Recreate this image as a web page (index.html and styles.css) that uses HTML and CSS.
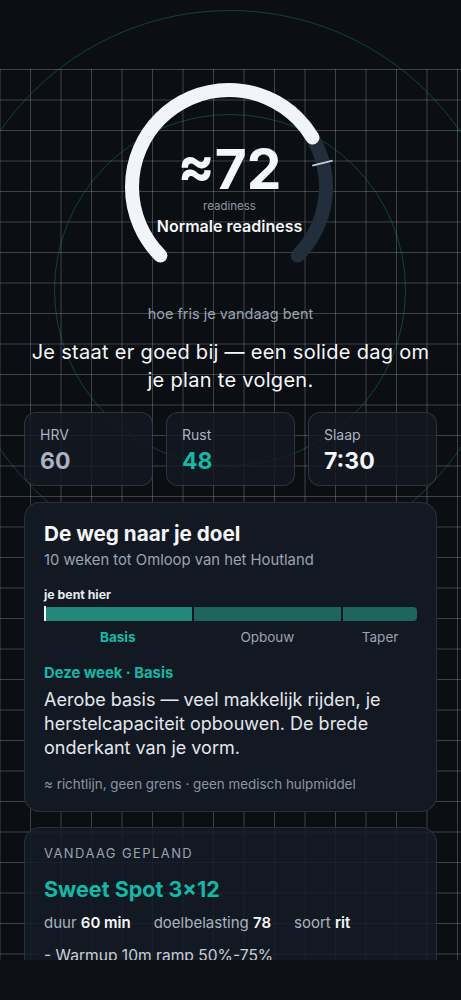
FILE: index.html
```html
<!DOCTYPE html>
<html lang="nl">
<head>
<meta charset="utf-8">
<title>Readiness</title>
<link rel="stylesheet" href="styles.css">
</head>
<body>
<div class="app">
  <div class="rings" aria-hidden="true">
    <span class="ring ring-outer"></span>
    <span class="ring ring-inner"></span>
  </div>
  <header class="topbar"></header>
  <main class="feed">
    <div class="feed-inner">
      <section class="gauge">
        <svg class="gauge-svg" viewBox="0 0 224 190" width="224" height="190">
          <path class="gauge-track" d="M42.41 179.59 A97 97 0 1 1 179.59 179.59" pathLength="100"/>
          <path class="gauge-fill" d="M42.41 179.59 A97 97 0 1 1 179.59 179.59" pathLength="100" stroke-dasharray="72 200"/>
          <line class="gauge-tick" x1="194.3" y1="89.6" x2="214.6" y2="84.6"/>
        </svg>
        <div class="gauge-text">
          <div class="gauge-value">≈72</div>
          <div class="gauge-unit">readiness</div>
          <div class="gauge-state">Normale readiness</div>
        </div>
      </section>

      <p class="kicker">hoe fris je vandaag bent</p>
      <h1 class="headline">Je staat er goed bij — een solide dag om je plan te volgen.</h1>

      <div class="metrics">
        <div class="metric">
          <div class="metric-label">HRV</div>
          <div class="metric-value muted">60</div>
        </div>
        <div class="metric">
          <div class="metric-label">Rust</div>
          <div class="metric-value teal">48</div>
        </div>
        <div class="metric">
          <div class="metric-label">Slaap</div>
          <div class="metric-value">7:30</div>
        </div>
      </div>

      <section class="card goal">
        <h2 class="goal-title">De weg naar je doel</h2>
        <p class="goal-sub">10 weken tot Omloop van het Houtland</p>
        <div class="here">je bent hier</div>
        <div class="phase-bar">
          <span class="seg seg-base"></span>
          <span class="seg seg-build"></span>
          <span class="seg seg-taper"></span>
          <span class="here-marker"></span>
        </div>
        <div class="phase-labels">
          <span class="pl pl-base active">Basis</span>
          <span class="pl pl-build">Opbouw</span>
          <span class="pl pl-taper">Taper</span>
        </div>
        <div class="week-title">Deze week · Basis</div>
        <p class="week-text">Aerobe basis — veel makkelijk rijden, je herstelcapaciteit opbouwen. De brede onderkant van je vorm.</p>
        <p class="disclaimer">≈ richtlijn, geen grens · geen medisch hulpmiddel</p>
      </section>

      <section class="card plan">
        <div class="plan-kicker">VANDAAG GEPLAND</div>
        <h2 class="plan-title">Sweet Spot 3×12</h2>
        <div class="plan-stats">
          <span>duur <b>60 min</b></span>
          <span>doelbelasting <b>78</b></span>
          <span>soort <b>rit</b></span>
        </div>
        <p class="plan-step">- Warmup 10m ramp 50%-75%</p>
      </section>
    </div>
  </main>
  <nav class="tabbar"></nav>
</div>
</body>
</html>
```
FILE: styles.css
```css
* { box-sizing: border-box; }
html, body { margin: 0; padding: 0; }
body {
  background: #0b0f14;
  font-family: Inter, "Noto Sans", "Liberation Sans", sans-serif;
  color: #f1f5f9;
  width: 461px;
  height: 1000px;
  overflow: hidden;
}
.app {
  position: relative;
  width: 461px;
  height: 1000px;
  display: flex;
  flex-direction: column;
  overflow: hidden;
  background: #0b0f14;
}
.topbar { height: 69px; flex: none; }
.feed {
  flex: 1;
  min-height: 0;
  overflow: hidden;
  padding: 0 24px;
  background-color: #0b0f14;
  background-image:
    linear-gradient(to bottom, rgba(255,255,255,0.21) 0, rgba(255,255,255,0.21) 1px, transparent 1px),
    linear-gradient(to right, transparent calc(100% - 1px), rgba(255,255,255,0.21) calc(100% - 1px));
  background-size: 30.5px 30.5px;
  background-position: 0 0, 0.5px 0;
}
.feed-inner { position: relative; z-index: 2; }
.rings { position: absolute; inset: 0; z-index: 1; pointer-events: none; }
.ring {
  position: absolute;
  border-radius: 50%;
  border: 1px solid rgba(26, 160, 140, 0.34);
}
.ring-outer { left: -50px; top: 10px; width: 560px; height: 560px; }
.ring-inner { left: 54px; top: 114px; width: 352px; height: 352px; }
.tabbar {
  height: 40px;
  flex: none;
  background: #0c0f14;
  position: relative;
  z-index: 3;
}

/* gauge */
.gauge {
  position: relative;
  width: 224px;
  height: 190px;
  margin: 7px auto 0;
  left: -1px;
}
.gauge-svg { display: block; }
.gauge-track, .gauge-fill {
  fill: none;
  stroke-width: 14;
  stroke-linecap: round;
}
.gauge-track { stroke: #232e3c; }
.gauge-fill { stroke: #f1f5f9; }
.gauge-tick { stroke: #c3cbd6; stroke-width: 2; }
.gauge-text {
  position: absolute;
  left: 0; right: 0; top: 66px;
  display: flex;
  flex-direction: column;
  align-items: center;
}
.gauge-value {
  font-size: 55px;
  line-height: 54px;
  font-weight: 700;
  letter-spacing: 0;
  color: #f5f7fa;
}
.gauge-unit {
  margin-top: 3px;
  font-size: 11.5px;
  line-height: 14px;
  color: #8e97a5;
}
.gauge-state {
  margin-top: 3px;
  font-size: 16px;
  line-height: 20px;
  font-weight: 600;
  color: #f5f7fa;
}

.kicker {
  margin: 39px 0 0;
  text-align: center;
  font-size: 14.5px;
  line-height: 18px;
  color: #9aa3b0;
}
.headline {
  margin: 15px 0 0;
  text-align: center;
  font-size: 20px;
  line-height: 28px;
  font-weight: 400;
  letter-spacing: 0.3px;
  color: #f5f7fa;
}

.metrics {
  margin-top: 18px;
  display: grid;
  grid-template-columns: repeat(3, 1fr);
  gap: 13px;
}
.metric {
  height: 74px;
  padding: 13px 15px 0;
  border-radius: 12px;
  background: rgba(20, 25, 34, 0.82);
  border: 1px solid rgba(255, 255, 255, 0.12);
}
.metric-label {
  font-size: 14px;
  line-height: 18px;
  color: #aab3bf;
}
.metric-value {
  margin-top: 3px;
  font-size: 23px;
  line-height: 28px;
  font-weight: 700;
  color: #f5f7fa;
}
.metric-value.muted { color: #a9b3c2; }
.metric-value.teal { color: #14b8a6; }

.card {
  border-radius: 16px;
  border: 1px solid rgba(255, 255, 255, 0.1);
}
.goal {
  margin-top: 16px;
  background: #131922;
  padding: 18px 19px 18px;
  height: 310px;
}
.goal-title {
  margin: 0;
  font-size: 20.7px;
  line-height: 26px;
  font-weight: 700;
  color: #f5f7fa;
}
.goal-sub {
  margin: 3px 0 0;
  font-size: 14.8px;
  line-height: 20px;
  color: #9ba4b1;
}
.here {
  margin-top: 17px;
  font-size: 12.3px;
  line-height: 16px;
  font-weight: 700;
  color: #e8ebef;
}
.phase-bar {
  position: relative;
  margin-top: 4px;
  display: flex;
  gap: 2px;
  height: 14px;
}
.seg { display: block; height: 14px; }
.seg-base { flex: 4; background: #22887a; border-radius: 4px 0 0 4px; }
.seg-build { flex: 4; background: #1d655e; }
.seg-taper { flex: 2; background: #1d655e; border-radius: 0 4px 4px 0; }
.here-marker {
  position: absolute;
  left: 0; top: -1px;
  width: 2px; height: 15px;
  background: #f5f7fa;
}
.phase-labels {
  margin-top: 7px;
  display: flex;
  gap: 2px;
}
.pl {
  text-align: center;
  font-size: 13.5px;
  line-height: 18px;
  color: #9aa3b0;
}
.pl-base { flex: 4; }
.pl-build { flex: 4; }
.pl-taper { flex: 2; }
.pl.active { color: #14b8a6; font-weight: 700; }
.week-title {
  margin-top: 17px;
  font-size: 14.8px;
  line-height: 20px;
  font-weight: 700;
  color: #14b8a6;
}
.week-text {
  margin: 5px 0 0;
  font-size: 18px;
  line-height: 24px;
  color: #e3e7ec;
}
.disclaimer {
  margin: 15px 0 0;
  font-size: 13.4px;
  line-height: 18px;
  color: #8c95a3;
}

.plan {
  margin-top: 15px;
  background: rgba(21, 27, 37, 0.86);
  padding: 16px 19px 20px;
}
.plan-kicker {
  font-size: 13px;
  line-height: 18px;
  letter-spacing: 1.4px;
  color: #9aa3b0;
}
.plan-title {
  margin: 13px 0 0;
  font-size: 21.5px;
  line-height: 28px;
  font-weight: 700;
  color: #14b8a6;
}
.plan-stats {
  margin-top: 9px;
  display: flex;
  gap: 23px;
  font-size: 15px;
  line-height: 22px;
  color: #aab3bf;
}
.plan-stats b { color: #f5f7fa; font-weight: 600; }
.plan-step {
  margin: 11px 0 0;
  font-size: 15.6px;
  line-height: 22px;
  color: #c9cfd8;
}
```
